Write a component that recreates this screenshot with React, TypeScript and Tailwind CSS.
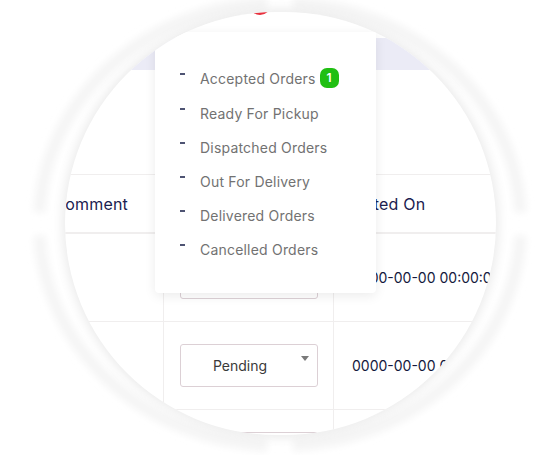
import React from 'react';

const menuItems = [
  { label: 'Accepted Orders', count: 1 },
  { label: 'Ready For Pickup' },
  { label: 'Dispatched Orders' },
  { label: 'Out For Delivery' },
  { label: 'Delivered Orders' },
  { label: 'Cancelled Orders' },
];

const StatusSelect: React.FC<{ value: string }> = ({ value }) => (
  <div className="relative w-[138px] h-[43px] border border-[#dcd0d5] rounded-[3px] flex items-center justify-center pr-[18px] text-[14px] text-[#3a3a3a]">
    {value}
    <span className="absolute right-[8px] top-[11px] w-0 h-0 border-l-[4px] border-r-[4px] border-t-[5px] border-l-transparent border-r-transparent border-t-[#7a7a7a]" />
  </div>
);

const Row: React.FC<{ date: string }> = ({ date }) => (
  <div className="flex h-[88px] border-b border-[#f0eeee]">
    <div className="w-[163px]" />
    <div className="w-[171px] border-l border-r border-[#f0eeee] flex items-center pl-[16px]">
      <StatusSelect value="Pending" />
    </div>
    <div className="flex-1 flex items-center pl-[18px] text-[14px] text-[#14193d] whitespace-nowrap">{date}</div>
  </div>
);

export default function App() {
  return (
    <div className="relative w-[546px] h-[455px] bg-white overflow-hidden font-[Inter,'Liberation_Sans',sans-serif]">
      {/* outer halo ring */}
      <svg className="absolute inset-0" width="546" height="455" viewBox="0 0 546 455">
        <defs>
          <filter id="soft" x="-10%" y="-10%" width="120%" height="120%">
            <feGaussianBlur stdDeviation="3.5" />
          </filter>
        </defs>
        <g fill="none" stroke="#f5f5f5" strokeWidth="12" filter="url(#soft)">
          <path d="M520.7 235.6 A241 222 0 0 1 292.6 445.7" />
          <path d="M267.4 445.7 A241 222 0 0 1 39.3 235.6" />
          <path d="M39.3 212.4 A241 222 0 0 1 267.4 2.3" />
          <path d="M292.6 2.3 A241 222 0 0 1 520.7 212.4" />
        </g>
      </svg>

      {/* magnified lens */}
      <div className="absolute left-[65px] top-[12px] w-[431px] h-[423px] rounded-full overflow-hidden bg-white shadow-[0_0_12px_2px_rgba(0,0,0,0.09)]">
        <div className="relative ml-[-65px] w-[546px]">
          <div className="absolute left-[249px] top-[-19px] w-[22px] h-[22px] rounded-full bg-[#e8303d]" />

          <div className="h-[26px]" />
          <div className="h-[32px] bg-[#ebebf6]" />
          <div className="h-[104px]" />

          <div className="flex h-[60px] items-center border-t border-b-2 border-[#f0eeee] text-[16px] text-[#1b2150] tracking-[0.2px]">
            <div className="w-[163px] text-right pr-[35px] whitespace-nowrap">Comment</div>
            <div className="w-[171px]" />
            <div className="flex-1 pl-[3px] whitespace-nowrap">Created On</div>
          </div>

          <Row date="0000-00-00 00:00:00" />
          <Row date="0000-00-00 00:00:00" />
          <Row date="0000-00-00 00:00:00" />

          {/* dropdown menu */}
          <div className="absolute left-[155px] top-[20px] w-[221px] h-[261px] bg-white rounded-b-[4px] shadow-[0_3px_12px_rgba(0,0,0,0.08)] pt-[28px]">
            {menuItems.map((item, i) => (
              <div key={item.label} className={`flex items-center ${i === 0 ? 'h-[36px]' : 'h-[34px]'}`}>
                <span className="ml-[25px] mr-[15px] w-[5px] h-[2px] bg-[#4e5473] -translate-y-[4px]" />
                <span className="text-[14px] text-[#727272] tracking-[0.2px] whitespace-nowrap">{item.label}</span>
                {item.count != null && (
                  <span className="ml-[4px] w-[19px] h-[20px] rounded-[7px] bg-[#20bf12] text-white text-[12px] font-semibold flex items-center justify-center">
                    {item.count}
                  </span>
                )}
              </div>
            ))}
          </div>
        </div>
      </div>
    </div>
  );
}
